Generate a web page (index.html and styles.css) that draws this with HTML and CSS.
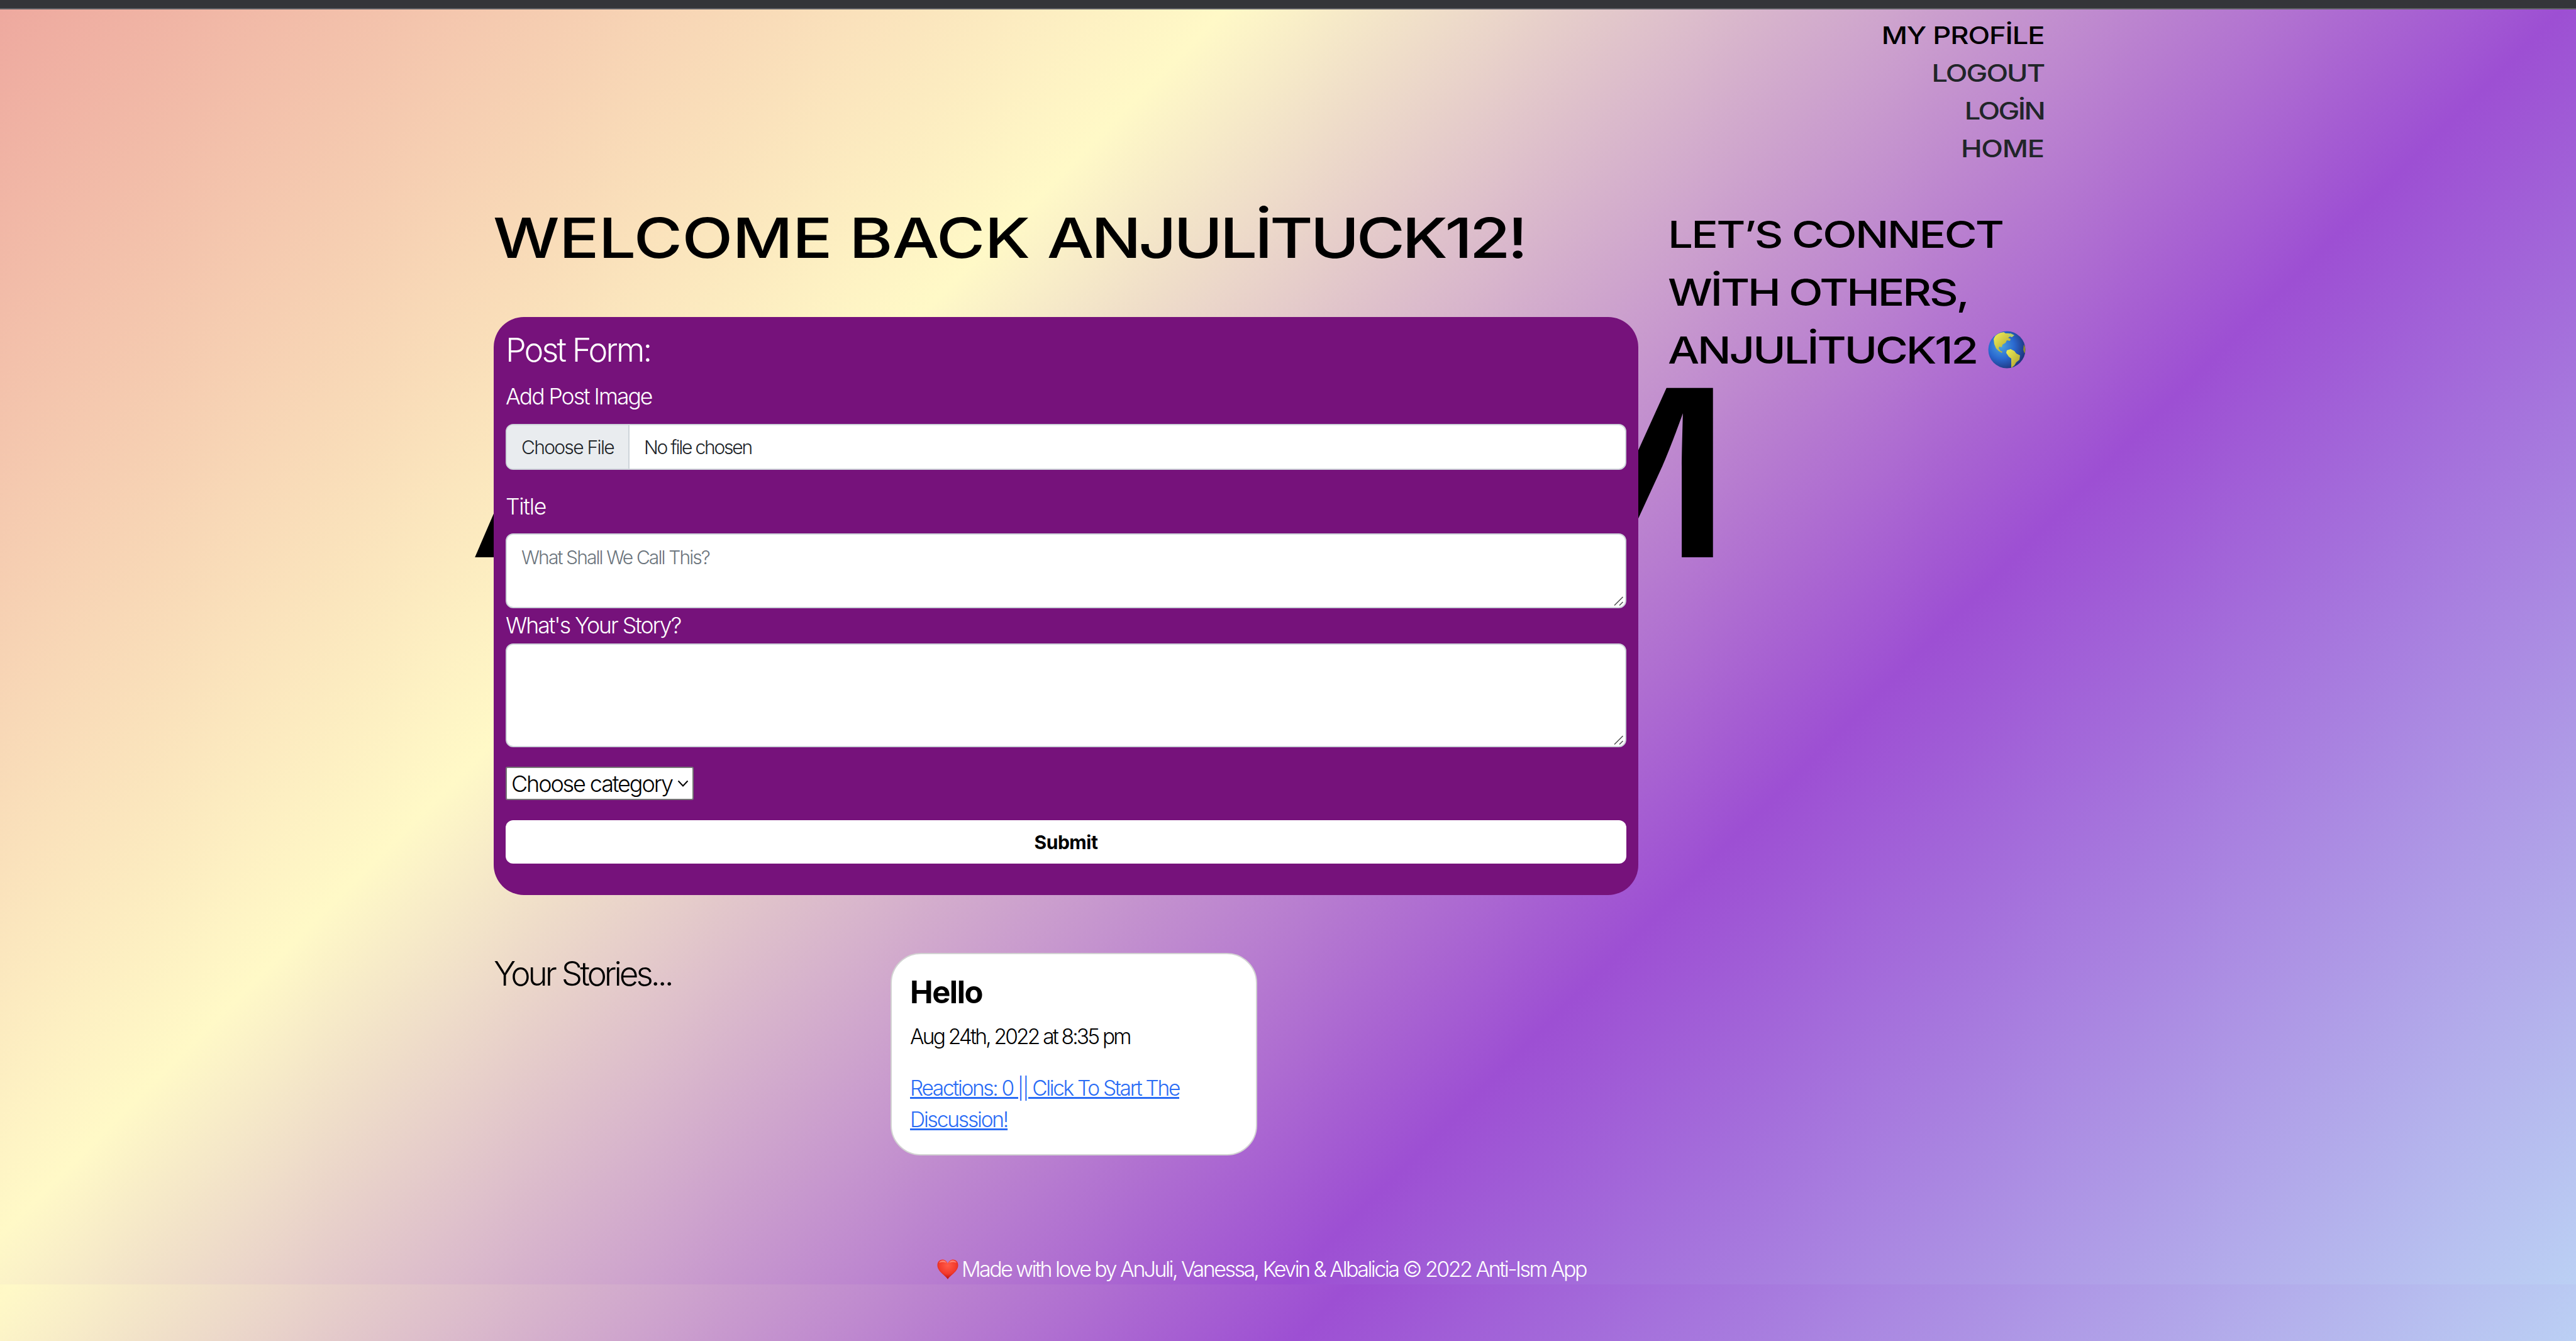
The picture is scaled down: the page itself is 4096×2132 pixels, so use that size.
FILE: index.html
```html
<!DOCTYPE html>
<html lang="en">
<head>
<meta charset="utf-8">
<title>Anti-Ism</title>
<link rel="stylesheet" href="styles.css">
</head>
<body>
<div class="topbar"></div>
<div class="page">
  <nav class="nav display" lang="tr">
    <a class="nav-link profile">My Profile</a>
    <a class="nav-link logout">Logout</a>
    <a class="nav-link login">Login</a>
    <a class="nav-link home">Home</a>
  </nav>
  <div class="columns">
    <main class="main">
      <h1 class="welcome display" lang="tr"><span class="greeting">Welcome Back </span>Anjulituck12!</h1>
      <div class="brand display" lang="tr">Anti-Ism</div>
      <form class="post-form">
        <h2 class="form-title">Post Form:</h2>
        <label class="label label-image">Add Post Image</label>
        <div class="file"><span class="file-button">Choose File</span><span class="file-name">No file chosen</span></div>
        <label class="label label-title">Title</label>
        <div class="area area-title">What Shall We Call This?
          <svg class="grip" viewBox="0 0 16 16"><path d="M1 14.5 14.5 1M9 14.5l5.5-5.5"/></svg></div>
        <label class="label label-story">What's Your Story?</label>
        <div class="area area-story">
          <svg class="grip" viewBox="0 0 16 16"><path d="M1 14.5 14.5 1M9 14.5l5.5-5.5"/></svg></div>
        <div class="select">Choose category
          <svg class="chevron" viewBox="0 0 18 12"><path d="M1.5 1.5 9 9.5l7.5-8"/></svg></div>
        <button type="button" class="submit">Submit</button>
      </form>
    </main>
    <aside class="connect display" lang="tr">
      <div class="line line-1">Let’s Connect</div>
      <div class="line line-2">with Others,</div>
      <div class="last"><span class="line line-3">anjulituck12</span>
        <svg class="globe" viewBox="0 0 60 60">
          <defs>
            <radialGradient id="sea" cx=".35" cy=".4" r=".7"><stop offset="0" stop-color="#4aa3e0"/><stop offset=".5" stop-color="#2a68cf"/><stop offset="1" stop-color="#1d2f74"/></radialGradient>
            <linearGradient id="land" x1="0" y1="0" x2="1" y2="1"><stop offset="0" stop-color="#f2f25a"/><stop offset="1" stop-color="#a69a2c"/></linearGradient>
          </defs>
          <circle cx="30" cy="30" r="29.5" fill="url(#sea)"/>
          <path fill="url(#land)" d="M11 9C15 4 20 3 25 2l3 2 5 0 5 3 1 3-4-1-3 2 4 2-1 3-5-1-2 4-5 3-1 4-4-1-1 3 3 4 3 1-1 2-5-3-4-4-3-7-1-8z"/>
          <path fill="url(#land)" d="M30 31l6-2 6 3 3 4 6 3-1 7-5 4-3 5-5 4 0-6 0-9-4-3-4-6z"/>
          <path fill="#8f8a32" d="M57 22c3 4 3 10 1 14l-2-6z"/>
          <path fill="#b7cf6c" d="M31 5l5-1 6 3-4 3-5-2z"/>
        </svg></div>
    </aside>
  </div>
  <section class="stories">
    <h2 class="stories-title">Your Stories...</h2>
    <article class="story">
      <h3 class="story-title">Hello</h3>
      <p class="story-date">Aug 24th, 2022 at 8:35 pm</p>
      <a class="story-link"><span>Reactions: 0 || Click To Start The</span><br><span class="wide">Discussion!</span></a>
    </article>
  </section>
  <footer class="footer">
    <svg class="heart" viewBox="0 0 34 33">
      <defs><radialGradient id="red" cx=".5" cy=".3" r=".65"><stop offset="0" stop-color="#ff5a48"/><stop offset=".65" stop-color="#f33a2c"/><stop offset="1" stop-color="#c01512"/></radialGradient></defs>
      <path fill="url(#red)" d="M17 32C14 26 .5 20 .5 9.5.5 4 4 .5 8.5.5 12.5.5 15.5 3 17 7 18.5 3 21.5.5 25.5.5 30 .5 33.5 4 33.5 9.5 33.5 20 20 26 17 32z"/>
      <path fill="#ffb3a8" opacity=".6" d="M3 6c1-3 4-4 6-4 3 0 5 2 6 4-3-2-9-2-12 0zM19 6c1-2 3-4 6-4 2 0 5 1 6 4-3-2-9-2-12 0z"/>
    </svg>
    <span>Made with love by AnJuli, Vanessa, Kevin &amp; Albalicia © 2022 Anti-Ism App</span>
  </footer>
</div>
</body>
</html>
```
FILE: styles.css
```css
* { box-sizing: border-box; margin: 0; }
body {
  font-family: Inter, "Liberation Sans", sans-serif;
  font-weight: 300;
  height: 2132px;
  overflow: hidden;
  background: linear-gradient(135deg, #eea99f 81px, #fff9c7 1459px, #9d4fd3 2962px, #bbd0f4 4411px);
}
.topbar { height: 15px; background: #343539; border-bottom: 2px solid #606166; }
.page {
  position: relative;
  z-index: 0;
  height: 2027px;
  background: linear-gradient(135deg, #eea99f 0, #fff9c7 1378px, #9d4fd3 2881px, #bbd0f4 4330px);
}

/* Wide capital lettering */
.display { font-weight: 500; text-transform: uppercase; color: #000; white-space: nowrap; }

.nav {
  display: flex;
  flex-direction: column;
  align-items: flex-end;
  padding: 11px 846px 0 0;
  font-size: 38px;
  line-height: 60px;
}
.nav-link { color: #212529; transform: scaleX(1.19); transform-origin: right; }
.nav-link.profile { color: #000; letter-spacing: -.024em; }
.logout { letter-spacing: -.043em; }
.login { letter-spacing: -.058em; }
.home { letter-spacing: -.028em; }

.columns { display: grid; grid-template-columns: 1821px 600px; column-gap: 47px; padding: 57px 0 0 784px; }
.welcome {
  width: max-content;
  font-size: 88.5px;
  line-height: 110px;
  letter-spacing: -.0425em;
  transform: scaleX(1.19);
  transform-origin: left;
}
.greeting { letter-spacing: -.006em; }
.brand {
  position: absolute;
  left: 744px;
  top: 513px;
  z-index: -1;
  font-size: 370px;
  line-height: 448px;
  letter-spacing: -.026em;
  transform: scaleX(1.21);
  transform-origin: left;
}

.post-form { margin: 71px 0 0 1px; height: 919px; padding: 22px 19px 0; border-radius: 48px; background: #76127b; color: #fff; }
.form-title { font-size: 52px; line-height: 62px; font-weight: 300; letter-spacing: -.055em; }
.label { display: block; font-size: 35.5px; line-height: 54px; letter-spacing: -.056em; }
.label-image { margin: 16px 0; }
.file {
  display: flex;
  height: 73px;
  font-size: 30px;
  line-height: 71px;
  color: #212529;
  background: #fff;
  border: 2px solid #ced4da;
  border-radius: 12px;
  overflow: hidden;
}
.file-button { width: 195px; padding-left: 23px; background: #e9ecef; border-right: 2px solid #ced4da; letter-spacing: -.056em; }
.file-name { padding-left: 23px; letter-spacing: -.074em; }
.label-title { margin: 32px 0 15px; letter-spacing: -.035em; }
.area { position: relative; background: #fff; border: 2px solid #ced4da; border-radius: 12px; color: #6c757d; font-size: 30px; letter-spacing: -.063em; }
.area-title { height: 119px; padding: 13px 23px; line-height: 46px; }
.label-story { padding-top: 1px; }
.area-story { height: 165px; margin-top: .5px; }
.grip { position: absolute; right: 2px; bottom: 1px; width: 16px; height: 16px; fill: none; stroke: #555; stroke-width: 1.6; }
.select {
  display: flex;
  align-items: center;
  justify-content: space-between;
  width: 299px;
  height: 53px;
  margin-top: 31px;
  padding: 1px 6px 0 7px;
  border: 2px solid #767676;
  border-radius: 3px;
  background: #fff;
  color: #000;
  font-size: 36px;
  letter-spacing: -.059em;
}
.chevron { width: 18px; height: 12px; fill: none; stroke: #000; stroke-width: 2; }
.submit {
  display: block;
  width: 100%;
  height: 69px;
  margin-top: 32px;
  padding: 2px 0 0;
  border: 0;
  border-radius: 12px;
  background: #fff;
  color: #000;
  font: 700 30px Inter, sans-serif;
  letter-spacing: -.016em;
}

.connect { font-size: 59.5px; line-height: 92.1px; padding-top: 3px; }
.line { width: max-content; transform: scaleX(1.19); transform-origin: left; }
.line-1 { letter-spacing: -.038em; }
.line-2 { letter-spacing: -.045em; }
.line-3 { letter-spacing: -.044em; }
.last { display: flex; align-items: center; gap: 96px; }
.globe { width: 60px; height: 60px; }

.stories { display: grid; grid-template-columns: 631px 583px; margin: 92px 0 0 785px; }
.stories-title { padding-top: 1px; font-size: 53px; line-height: 64px; font-weight: 300; letter-spacing: -.076em; }
.story { height: 322px; padding: 32px 29px 0; background: #fff; border: 2px solid #d2d2d2; border-radius: 48px; color: #000; white-space: nowrap; }
.story-title { font-size: 49px; line-height: 58px; font-weight: 700; letter-spacing: -.03em; }
.story-date { margin: 16px 0 32px; font-size: 33.5px; line-height: 50px; letter-spacing: -.084em; }
.story-link { font-size: 33.5px; line-height: 50px; color: #2a6cf5; text-decoration: underline; text-decoration-thickness: 3px; letter-spacing: -.07em; }
.wide { letter-spacing: -.065em; }

.footer {
  display: flex;
  align-items: center;
  gap: 5px;
  margin-top: 156px;
  padding-left: 1490px;
  font-size: 34px;
  line-height: 50px;
  letter-spacing: -.0745em;
  color: #fff;
}
.heart { width: 34px; height: 33px; }
```
